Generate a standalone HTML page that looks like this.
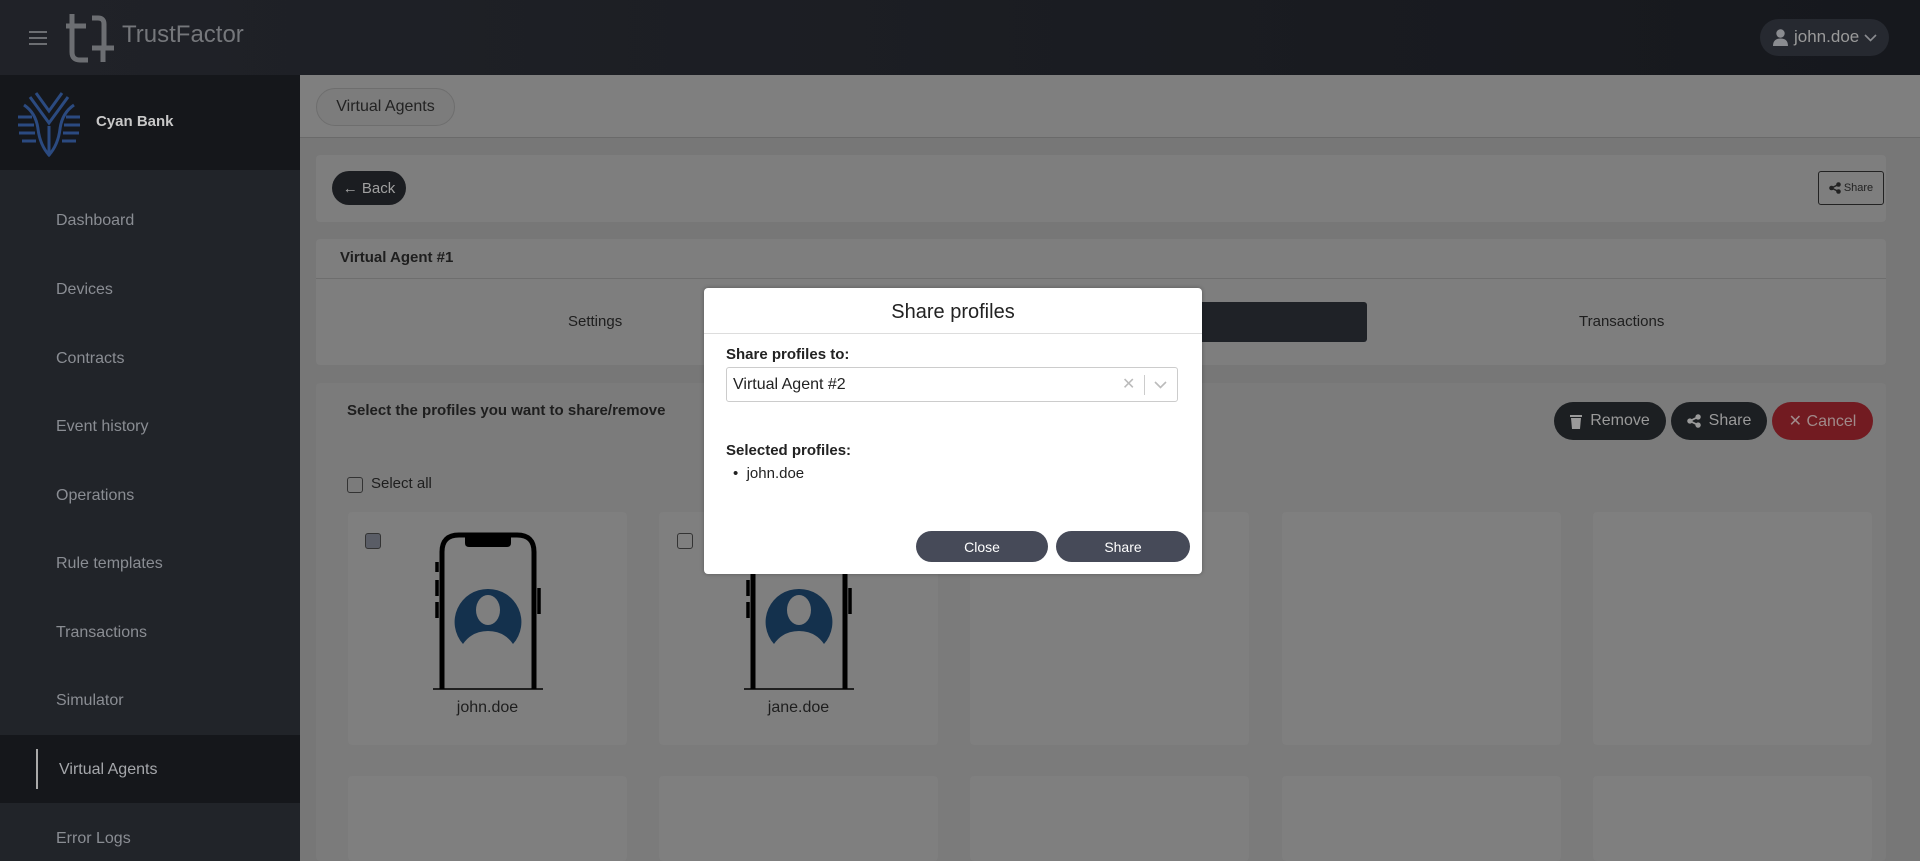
<!DOCTYPE html>
<html><head><meta charset="utf-8"><style>
*{box-sizing:border-box;margin:0;padding:0}
html,body{width:1920px;height:861px;overflow:hidden}
body{background:#777;font-family:"Liberation Sans",sans-serif;position:relative;color:#1e1e1e}
.abs{position:absolute}
.hdr{left:0;top:0;width:1920px;height:75px;background:linear-gradient(90deg,#202228,#16181d)}
.side{left:0;top:75px;width:300px;height:786px;background:#212429}
.brand{left:0;top:75px;width:300px;height:95px;background:#15171b}
.nav{left:56px;font-size:16px;color:#8a8d93}
.card{background:#7e7e7e;border-radius:4px}
.tile{background:#7f7f7f;border-radius:4px;width:279px;height:233px}
.btn{border-radius:20px;color:#9a9a9a;font-size:16px;display:flex;align-items:center;justify-content:center;gap:8px}
.cb{width:16px;height:16px;border:1.5px solid #333;border-radius:3px}
</style></head><body>
<div class="abs hdr"></div>
<div class="abs" style="left:29px;top:31px;width:18px;height:14px;border-top:2px solid #6c6e72;border-bottom:2px solid #6c6e72"><div style="margin-top:4px;height:2px;background:#6c6e72"></div></div>
<svg class="abs" style="left:66px;top:14px" width="50" height="50" viewBox="0 0 50 50" fill="none" stroke="#6c6e72" stroke-width="5"><path d="M6 0V38q0 8 8 8h8"/><path d="M0 12h20"/><path d="M26 4h6q6 0 6 6v24"/><path d="M26 34h22M37 34v14"/></svg>
<div class="abs" style="left:122px;top:21px;font-size:24px;color:#75777b">TrustFactor</div>
<div class="abs" style="left:1760px;top:19px;width:129px;height:37px;background:#262930;border-radius:19px"></div>
<svg class="abs" style="left:1773px;top:29px" width="15" height="17" viewBox="0 0 15 17" fill="#8a8c90"><circle cx="7.5" cy="4.5" r="4.2"/><path d="M0 17q0-7.5 7.5-7.5T15 17z"/></svg>
<div class="abs" style="left:1794px;top:27px;font-size:17px;color:#9a9a9a">john.doe</div>
<svg class="abs" style="left:1864px;top:34px" width="13" height="8" viewBox="0 0 13 8" fill="none" stroke="#8a8c90" stroke-width="1.6"><path d="M1 1l5.5 5.5L12 1"/></svg>

<div class="abs side"></div>
<div class="abs brand"></div>
<svg class="abs" style="left:16px;top:91px" width="66" height="66" viewBox="0 0 66 66" fill="none" stroke="#2b4a80" stroke-width="3"><path d="M20 2l13 18 13-18M14 6l19 26 19-26M8 14q12 8 14 24t11 26q9-10 11-26t14-24"/><path d="M2 26h14M2 34h16M3 42h16M6 50h14M50 26h14M48 34h16M47 42h16M46 50h14M33 35v30"/></svg>
<div class="abs" style="left:96px;top:113px;font-size:15px;font-weight:bold;color:#c8c8c8">Cyan Bank</div>
<div class="abs nav" style="top:212px">Dashboard</div>
<div class="abs nav" style="top:281px">Devices</div>
<div class="abs nav" style="top:350px">Contracts</div>
<div class="abs nav" style="top:418px">Event history</div>
<div class="abs nav" style="top:487px">Operations</div>
<div class="abs nav" style="top:555px">Rule templates</div>
<div class="abs nav" style="top:624px">Transactions</div>
<div class="abs nav" style="top:692px">Simulator</div>
<div class="abs" style="left:0;top:735px;width:300px;height:68px;background:#15171b"></div>
<div class="abs" style="left:36px;top:749px;width:2px;height:40px;background:#aaa"></div>
<div class="abs nav" style="top:761px;left:59px;color:#a5a7ab">Virtual Agents</div>
<div class="abs nav" style="top:830px">Error Logs</div>

<div class="abs" style="left:300px;top:75px;width:1620px;height:63px;background:#7f7f7f;border-bottom:1px solid #6a6a6a"></div>
<div class="abs" style="left:316px;top:88px;width:139px;height:38px;border:1px solid #6e6e6e;border-radius:19px;background:#7c7c7c;font-size:16px;display:flex;align-items:center;justify-content:center;color:#222">Virtual Agents</div>

<div class="abs card" style="left:316px;top:155px;width:1570px;height:67px"></div>
<div class="abs btn" style="left:332px;top:171px;width:74px;height:34px;background:#1b1d21;color:#a0a0a0;font-size:15px">&#8592; Back</div>
<div class="abs" style="left:1818px;top:171px;width:66px;height:34px;border:1px solid #222;border-radius:3px;font-size:11px;display:flex;align-items:center;justify-content:center;gap:3px;color:#222"><svg width="12" height="12" viewBox="0 0 12 12" fill="#222"><circle cx="9.5" cy="2.5" r="2.3"/><circle cx="2.5" cy="6" r="2.3"/><circle cx="9.5" cy="9.5" r="2.3"/><path d="M2.5 6L9.5 2.5M2.5 6l7 3.5" stroke="#222" stroke-width="1.5"/></svg>Share</div>

<div class="abs card" style="left:316px;top:239px;width:1570px;height:126px"></div>
<div class="abs" style="left:316px;top:278px;width:1570px;height:1px;background:#6e6e6e"></div>
<div class="abs" style="left:340px;top:249px;font-size:15px;font-weight:bold">Virtual Agent #1</div>
<div class="abs" style="left:568px;top:313px;font-size:15px">Settings</div>
<div class="abs" style="left:850px;top:302px;width:517px;height:40px;background:#1f2227;border-radius:3px"></div>
<div class="abs" style="left:1579px;top:313px;font-size:15px">Transactions</div>

<div class="abs card" style="left:316px;top:383px;width:1570px;height:478px;background:#7b7b7b"></div>
<div class="abs" style="left:347px;top:402px;font-size:15px;font-weight:bold">Select the profiles you want to share/remove</div>
<div class="abs btn" style="left:1554px;top:402px;width:112px;height:38px;background:#1c1f22"><svg width="12" height="15" viewBox="0 0 12 15" fill="#9a9a9a"><rect x="0" y="1" width="12" height="2"/><path d="M1 4h10l-1 11H2z"/></svg>Remove</div>
<div class="abs btn" style="left:1671px;top:402px;width:96px;height:38px;background:#1c1f22"><svg width="14" height="14" viewBox="0 0 12 12" fill="#9a9a9a"><circle cx="9.5" cy="2.5" r="2.3"/><circle cx="2.5" cy="6" r="2.3"/><circle cx="9.5" cy="9.5" r="2.3"/><path d="M2.5 6L9.5 2.5M2.5 6l7 3.5" stroke="#9a9a9a" stroke-width="1.5"/></svg>Share</div>
<div class="abs btn" style="left:1772px;top:402px;width:101px;height:38px;background:#721b21;color:#a08a8a">&#10005;&nbsp;Cancel</div>
<div class="abs cb" style="left:347px;top:477px"></div>
<div class="abs" style="left:371px;top:475px;font-size:15px">Select all</div>

<div class="abs tile" style="left:348px;top:512px"></div>
<div class="abs tile" style="left:659px;top:512px"></div>
<div class="abs tile" style="left:970px;top:512px"></div>
<div class="abs tile" style="left:1282px;top:512px"></div>
<div class="abs tile" style="left:1593px;top:512px"></div>
<div class="abs tile" style="left:348px;top:776px;height:85px"></div>
<div class="abs tile" style="left:659px;top:776px;height:85px"></div>
<div class="abs tile" style="left:970px;top:776px;height:85px"></div>
<div class="abs tile" style="left:1282px;top:776px;height:85px"></div>
<div class="abs tile" style="left:1593px;top:776px;height:85px"></div>

<div class="abs cb" style="left:365px;top:533px;background:#5a5d66;border-color:#333"></div>
<div class="abs cb" style="left:677px;top:533px"></div>
<svg class="abs" style="left:431px;top:532px" width="114" height="158" viewBox="0 0 114 158" fill="none"><path d="M11 157V20q0-17 17-17h58q17 0 17 17v137" stroke="#000" stroke-width="5"/><path d="M34 3h46v8q0 4-4 4H38q-4 0-4-4z" fill="#000"/><path d="M6 30v10M6 48v16M6 70v16M108 56v26" stroke="#000" stroke-width="3.5"/><path d="M2 157h110" stroke="#000" stroke-width="1.5"/><path d="M57 57a33 33 0 0 0-25 55q9-13 25-13t25 13a33 33 0 0 0-25-55z" fill="#14314d"/><ellipse cx="57" cy="78" rx="12" ry="15" fill="#7f7f7f"/></svg>
<svg class="abs" style="left:742px;top:532px" width="114" height="158" viewBox="0 0 114 158" fill="none"><path d="M11 157V20q0-17 17-17h58q17 0 17 17v137" stroke="#000" stroke-width="5"/><path d="M6 30v10M6 48v16M6 70v16M108 56v26" stroke="#000" stroke-width="3.5"/><path d="M2 157h110" stroke="#000" stroke-width="1.5"/><path d="M57 57a33 33 0 0 0-25 55q9-13 25-13t25 13a33 33 0 0 0-25-55z" fill="#14314d"/><ellipse cx="57" cy="78" rx="12" ry="15" fill="#7f7f7f"/></svg>
<div class="abs" style="left:348px;top:699px;width:279px;text-align:center;font-size:16px">john.doe</div>
<div class="abs" style="left:659px;top:699px;width:279px;text-align:center;font-size:16px">jane.doe</div>

<div class="abs" style="left:704px;top:288px;width:498px;height:286px;background:#fff;border-radius:4px;box-shadow:0 0 4px rgba(0,0,0,.3)">
 <div style="height:46px;border-bottom:1px solid #ddd;text-align:center;font-size:20px;line-height:48px;color:#222">Share profiles</div>
 <div class="abs" style="left:22px;top:58px;font-size:15px;font-weight:bold;color:#222">Share profiles to:</div>
 <div class="abs" style="left:22px;top:79px;width:452px;height:35px;border:1px solid #ccc;border-radius:3px;font-size:16px;line-height:33px;padding-left:6px;color:#222">Virtual Agent #2
  <span class="abs" style="left:395px;top:0;color:#bbb;font-size:16px">&#10005;</span>
  <span class="abs" style="left:417px;top:7px;width:1px;height:20px;background:#ccc"></span>
  <svg class="abs" style="left:427px;top:13px" width="13" height="8" viewBox="0 0 13 8" fill="none" stroke="#bbb" stroke-width="1.6"><path d="M1 1l5.5 5.5L12 1"/></svg>
 </div>
 <div class="abs" style="left:22px;top:154px;font-size:15px;font-weight:bold;color:#222">Selected profiles:</div>
 <div class="abs" style="left:29px;top:177px;font-size:15px;color:#222">&#8226;&nbsp;&nbsp;john.doe</div>
 <div class="abs btn" style="left:212px;top:243px;width:132px;height:31px;background:#464a58;color:#fff;font-size:14px">Close</div>
 <div class="abs btn" style="left:352px;top:243px;width:134px;height:31px;background:#464a58;color:#fff;font-size:14px">Share</div>
</div>
</body></html>
